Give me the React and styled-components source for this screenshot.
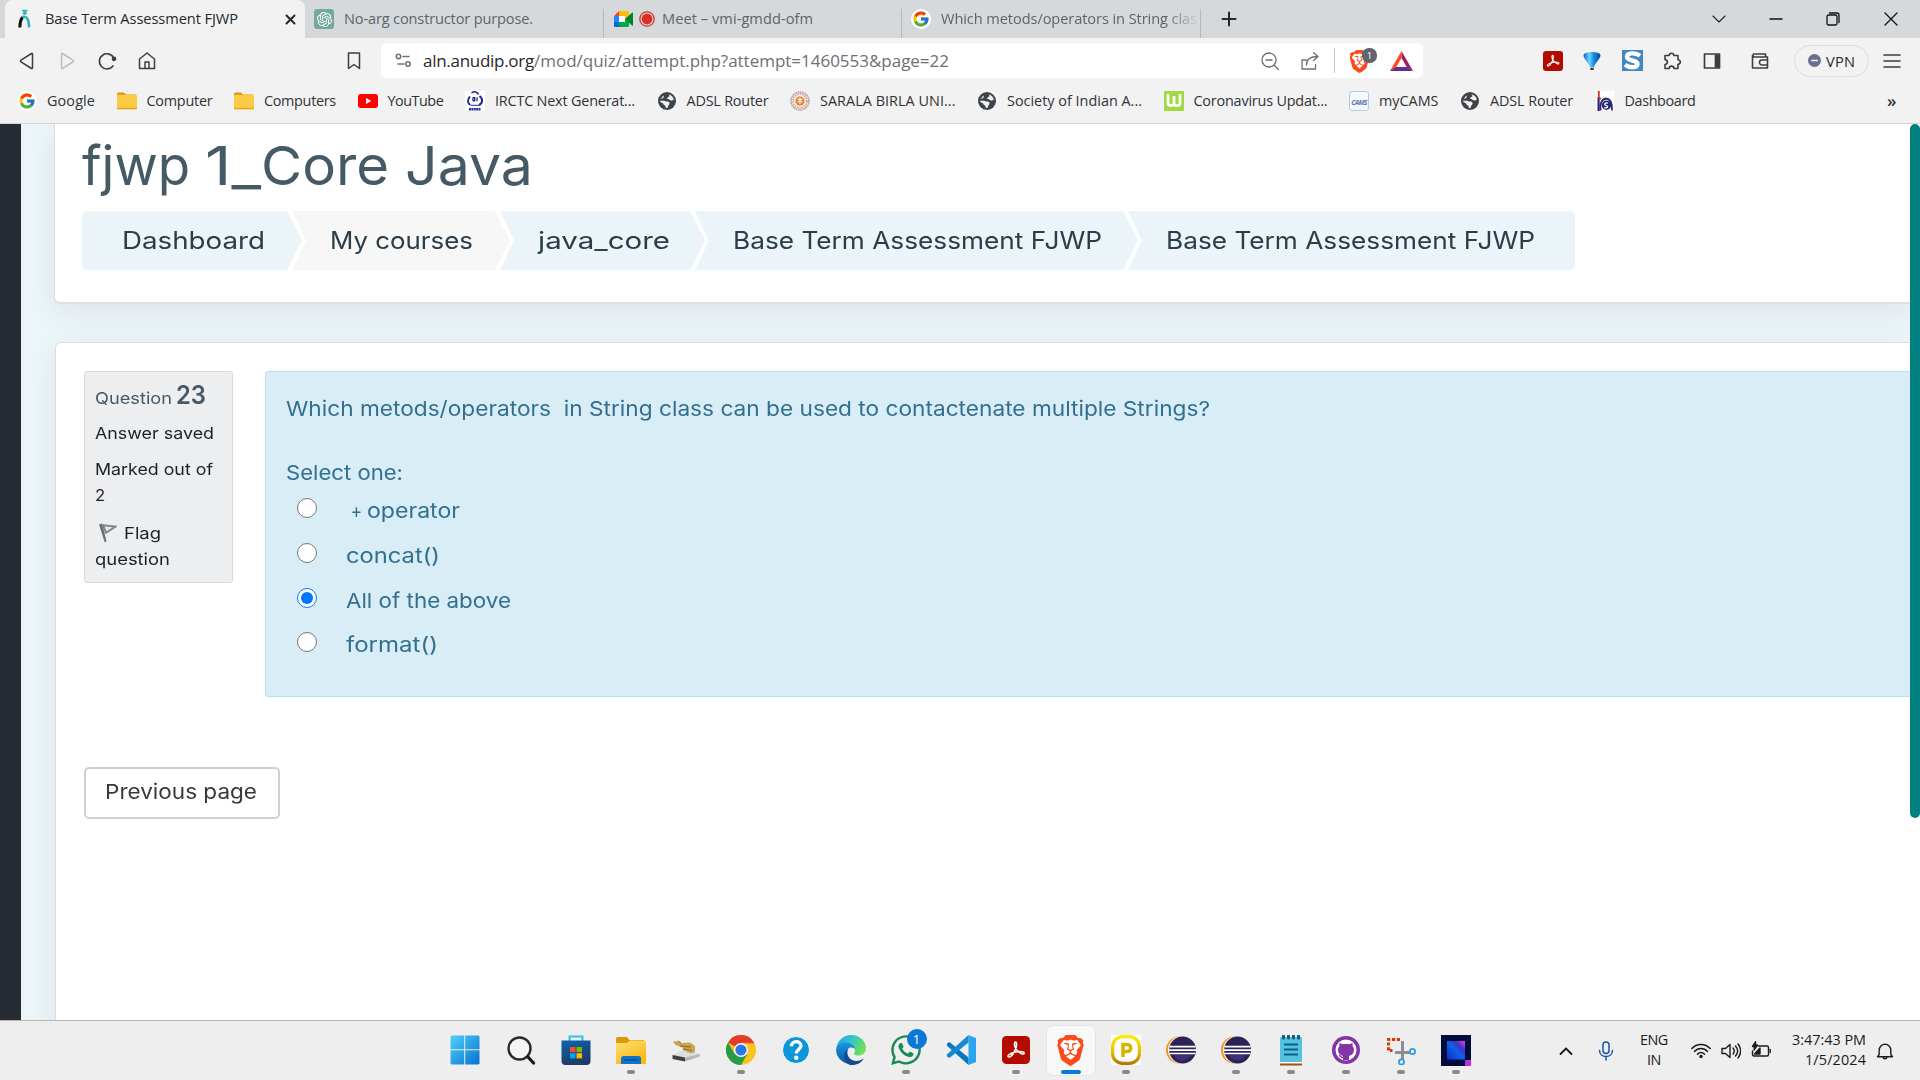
import React, { useLayoutEffect, useRef, useState } from 'react';
import styled, { createGlobalStyle, css } from 'styled-components';
import { FcGoogle } from 'react-icons/fc';
import { FaBrave, FaWhatsapp } from 'react-icons/fa6';
import { SiOpenai } from 'react-icons/si';

const ui = '"Open Sans", "Noto Sans", sans-serif';
const web = 'Inter, "Open Sans", sans-serif';

const Global = createGlobalStyle`
  * { box-sizing: border-box; }
  body { margin: 0; background: #fff; overflow: hidden; font-family: ${ui}; }
  svg { display: block; flex: none; }
`;

/* ---------- text with a set width ---------- */
const Tracked = styled.span`
  display: inline-block;
  flex: none;
  white-space: pre;
  width: ${(p) => p.$w}px;
`;
const Stretched = styled.span`
  display: inline-block;
  transform-origin: 0 50%;
`;

/* chrome labels: width reached by letter spacing */
function Text({ w, children }) {
  const ref = useRef(null);
  const [spacing, setSpacing] = useState(0);
  useLayoutEffect(() => {
    const range = document.createRange();
    range.selectNodeContents(ref.current);
    const natural = range.getBoundingClientRect().width;
    setSpacing((w - natural) / (children.length - 0.5));
  }, [w, children]);
  return (
    <Tracked ref={ref} $w={w} style={{ letterSpacing: spacing }}>
      {children}
    </Tracked>
  );
}

function Wide({ w, children }) {
  const ref = useRef(null);
  const [scale, setScale] = useState(1);
  useLayoutEffect(() => {
    const el = ref.current;
    el.style.transform = 'none';
    const next = w / el.getBoundingClientRect().width;
    el.style.transform = `scaleX(${next})`;
    setScale(next);
  }, [w, children]);
  return (
    <Tracked $w={w}>
      <Stretched ref={ref} style={{ transform: `scaleX(${scale})` }}>{children}</Stretched>
    </Tracked>
  );
}

/* ---------- browser chrome ---------- */
const Screen = styled.div`
  display: flex;
  flex-direction: column;
  width: 1920px;
  height: 1080px;
  overflow: hidden;
`;

const TabStrip = styled.div`
  display: flex;
  height: 38px;
  padding-left: 5px;
  background: #d5d9dc;
  color: #5f6468;
  font-size: 14.6px;
  line-height: 36px;
`;

const Tab = styled.div`
  display: flex;
  align-items: center;
  width: ${(p) => p.$w}px;
  padding-left: ${(p) => p.$pl}px;
  overflow: hidden;
  ${(p) =>
    p.$active &&
    css`
      background: #f2f2f2;
      color: #26292c;
      border-radius: 8px 8px 0 0;
    `}
`;

const TabDivider = styled.div`
  width: 1px;
  height: 29px;
  margin-top: 9px;
  background: #b6babd;
`;

const TabTitle = styled.div`
  display: flex;
  height: 38px;
  margin-left: ${(p) => p.$ml}px;
  overflow: hidden;
  ${(p) =>
    p.$fade &&
    css`
      mask-image: linear-gradient(to right, #000 88%, transparent 101%);
    `}
`;

const Slot = styled.div`
  display: flex;
  flex: none;
  align-items: center;
  justify-content: center;
  width: ${(p) => p.$w}px;
  height: ${(p) => p.$h || p.$w}px;
  margin-left: ${(p) => p.$ml || 0}px;
`;

const GptBadge = styled(Slot)`
  background: #75a99c;
  color: #fff;
  border-radius: 3px;
`;

const WhiteDisc = styled(Slot)`
  background: #fff;
  border-radius: 50%;
`;

const Toolbar = styled.div`
  display: flex;
  align-items: center;
  height: 47px;
  padding-bottom: 2px;
  background: #f2f2f2;
  color: #3b3e43;
`;

const AddressBar = styled.div`
  display: flex;
  align-items: center;
  width: 1042px;
  height: 35px;
  margin-left: 17px;
  background: #fff;
  border-radius: 5px;
  font-size: 17px;
  line-height: 35px;
  color: #6d7074;
`;

const UrlText = styled.div`
  display: flex;
  width: 524px;
  margin-left: 11px;
`;
const Host = styled.span`
  color: #26292c;
`;

const Rule = styled.div`
  width: 1px;
  height: 25px;
  margin-left: 14px;
  background: #c3c5c8;
`;

const ShieldBox = styled.div`
  position: relative;
  width: 28px;
  height: 28px;
  margin-left: 14px;
`;
const CountBadge = styled.div`
  position: absolute;
  left: 13px;
  top: 1px;
  width: 15px;
  height: 15px;
  border-radius: 7px;
  background: #62656f;
  color: #fff;
  font-size: 9.5px;
  line-height: 15px;
  text-align: center;
`;

const VpnPill = styled.div`
  display: flex;
  align-items: center;
  gap: 5px;
  width: 75px;
  height: 32px;
  margin-left: 25px;
  padding-left: 13px;
  border: 1px solid #dddddf;
  border-radius: 16px;
  color: #26292c;
  font-size: 14.6px;
  line-height: 30px;
`;

const Bookmarks = styled.div`
  display: flex;
  align-items: center;
  height: 39px;
  padding: 0 0 7px 17px;
  gap: 21.5px;
  background: #f2f2f2;
  border-bottom: 1px solid #d2d3d4;
  color: #303337;
  font-size: 14.4px;
  line-height: 24px;
`;
const Bookmark = styled.div`
  display: flex;
  align-items: center;
  gap: 10px;
`;
const More = styled.div`
  margin-left: 170px;
  font-size: 17px;
  font-weight: 600;
`;

/* ---------- page ---------- */
const Page = styled.div`
  display: flex;
  height: 896px;
  overflow: hidden;
  font-family: ${web};
`;
const SideRail = styled.div`
  flex: none;
  width: 21px;
  background: #272b33;
`;
const Main = styled.div`
  display: flex;
  flex-direction: column;
  width: 1889px;
  padding-left: 33px;
  background: #ecf5f8;
  overflow: hidden;
`;
const ScrollTrack = styled.div`
  flex: none;
  width: 10px;
  background: #fff;
`;
const ScrollThumb = styled.div`
  height: 694px;
  background: #008080;
  border-radius: 5px;
`;

const card = css`
  background: #fff;
  border: 1px solid #d9dfe2;
  border-right: 0;
  box-shadow: 0 8px 32px rgba(40, 30, 30, 0.075);
`;
const HeaderCard = styled.header`
  ${card}
  flex: none;
  height: 180px;
  padding: 10px 0 0 27px;
  border-top: 0;
  border-bottom-width: 2px;
  border-radius: 0 0 0 6px;
`;
const QuizCard = styled.section`
  ${card}
  flex: none;
  height: 720px;
  margin: 38px 0 0 1px;
  padding: 28px 0 0 28px;
  border-radius: 6px 0 0 0;
`;

const Title = styled.h1`
  margin: 0;
  height: 77px;
  color: #465a65;
  font-size: 54px;
  font-weight: 400;
  line-height: 64px;
`;

const Crumbs = styled.nav`
  display: flex;
  height: 59px;
  color: #2b3e47;
  font-size: 24px;
  font-weight: 370;
  line-height: 60px;
`;
const Crumb = styled.div`
  width: ${(p) => p.$w}px;
  padding-left: 38px;
  margin-left: -10px;
  background: ${(p) => (p.$muted ? '#f7f7f7' : '#ebf4f8')};
  clip-path: polygon(0 0, calc(100% - 15px) 0, 100% 50%, calc(100% - 15px) 100%, 0 100%, 14px 50%);
  &:first-child {
    margin-left: 0;
    padding-left: 40px;
    border-radius: 5px 0 0 5px;
    clip-path: polygon(0 0, calc(100% - 15px) 0, 100% 50%, calc(100% - 15px) 100%, 0 100%);
  }
  &:last-child {
    border-radius: 0 5px 5px 0;
    clip-path: polygon(0 0, 100% 0, 100% 100%, 0 100%, 14px 50%);
  }
`;

const QuestionRow = styled.div`
  display: flex;
  align-items: flex-start;
  gap: 32px;
`;
const InfoBox = styled.aside`
  flex: none;
  width: 149px;
  height: 212px;
  padding: 8px 0 0 10px;
  background: #edeef0;
  border: 1px solid #d6dadd;
  border-radius: 3px;
  color: #1d2125;
  font-size: 16.5px;
  font-weight: 370;
  line-height: 26px;
`;
const QuestionNo = styled.div`
  display: flex;
  align-items: baseline;
  gap: 4px;
  height: 40px;
  color: #465a65;
  line-height: 30px;
`;
const Big = styled.b`
  font-size: 25.5px;
  font-weight: 600;
`;
const InfoLine = styled.div`
  display: flex;
  align-items: center;
  height: 26px;
  margin-bottom: ${(p) => p.$mb || 0}px;
`;

const Formulation = styled.div`
  flex: 1;
  height: 326px;
  padding: 23px 0 0 20px;
  background: #d9edf6;
  border: 1px solid #b9dff0;
  border-right: 0;
  border-radius: 4px 0 0 4px;
  color: #33708f;
  font-size: 20.6px;
  font-weight: 370;
`;
const Prompt = styled.div`
  height: 64px;
  line-height: 27px;
`;
const SelectOne = styled.div`
  height: 31px;
  line-height: 27px;
`;
const Option = styled.label`
  display: flex;
  align-items: flex-start;
  height: ${(p) => p.$h}px;
  padding-left: 11px;
  line-height: 41px;
`;
const Radio = styled.input`
  flex: none;
  width: 20px;
  height: 20px;
  margin: 8px 29px 0 0;
`;
const PrevButton = styled.button`
  display: block;
  width: 196px;
  height: 52px;
  margin-top: 70px;
  padding: 0 0 4px 19px;
  background: #fff;
  border: 2px solid #d0d0d0;
  border-radius: 5px;
  color: #373a3c;
  font: 370 20.6px ${web};
  text-align: left;
`;

/* ---------- taskbar ---------- */
const Taskbar = styled.footer`
  display: flex;
  height: 60px;
  padding-left: 438px;
  background: #eeeeee;
  border-top: 1px solid #b4b4b4;
  color: #1c1c1c;
`;
const TaskCell = styled.div`
  position: relative;
  display: flex;
  flex: none;
  flex-direction: column;
  align-items: center;
  width: 48px;
  height: 49px;
  margin: 5px 3.5px;
  padding-top: 9px;
  border-radius: 6px;
  background: ${(p) => (p.$active ? '#f8f8f8' : 'transparent')};
  box-shadow: ${(p) => (p.$active ? '0 0 0 1px #e6e6e6' : 'none')};
`;
const RunMark = styled.div`
  width: ${(p) => (p.$active ? 20 : 8)}px;
  height: 4px;
  margin-top: 5px;
  border-radius: 2px;
  background: ${(p) => (p.$active ? '#0a78d4' : '#8a8a8a')};
`;
const Unread = styled.div`
  position: absolute;
  left: 25px;
  top: 3px;
  width: 20px;
  height: 20px;
  border-radius: 50%;
  background: #0a78d4;
  color: #fff;
  font-size: 13px;
  line-height: 20px;
  text-align: center;
`;
const Tray = styled.div`
  display: flex;
  align-items: center;
  height: 59px;
  margin-left: 74px;
  font-size: 14.4px;
`;
const Stack = styled.div`
  display: flex;
  flex-direction: column;
  align-items: ${(p) => p.$align};
  width: ${(p) => p.$w}px;
  margin-left: ${(p) => p.$ml}px;
  padding-bottom: 1px;
  line-height: 20px;
`;

/* ---------- icons ---------- */
const Line = ({ w = 20, h, vb = '0 0 20 20', sw = 1.5, color = 'currentColor', children }) => (
  <svg width={w} height={h || w} viewBox={vb} fill="none" stroke={color} strokeWidth={sw} strokeLinecap="round" strokeLinejoin="round">
    {children}
  </svg>
);

const AnudipIcon = () => (
  <svg width="14" height="20" viewBox="0 0 14 20" fill="none">
    <path d="M1.800 18.500C1.800 14 2.800 10.500 4.500 8" stroke="#111" strokeWidth="3" />
    <path d="M4.500 8C9 6.500 11 11 11 18.500" stroke="#27b5b8" strokeWidth="2.600" />
    <circle cx="6.800" cy="4" r="2" fill="#27b5b8" />
    <path d="M4 1.500h5.500" stroke="#27b5b8" strokeWidth="1.600" />
  </svg>
);
const MeetIcon = () => (
  <svg width="19" height="16" viewBox="0 0 19 16">
    <path d="M0 5l5-5v5z" fill="#ea4335" />
    <path d="M5 0h8.500a1.500 1.500 0 0 1 1.500 1.500V6l-4 3V5H5z" fill="#fbbc04" />
    <path d="M0 5h5v6H0z" fill="#2684fc" />
    <path d="M0 11h5v5H1.500A1.500 1.500 0 0 1 0 14.500z" fill="#0066da" />
    <path d="M5 11h6V8l4 3v3.500a1.500 1.500 0 0 1-1.500 1.500H5z" fill="#00ac47" />
    <path d="M11 8l7-6.300c.6-.5 1-.2 1 .4v12c0 .6-.5.9-1 .4z" fill="#00832d" />
    <path d="M5 5h6v6H5z" fill="#fff" />
  </svg>
);
const RecordIcon = () => (
  <svg width="16" height="16" viewBox="0 0 16 16">
    <circle cx="8" cy="8" r="7.200" fill="none" stroke="#d93025" strokeWidth="1.300" />
    <circle cx="8" cy="8" r="5.400" fill="#d93025" />
  </svg>
);
const FolderIcon = () => (
  <svg width="20" height="18" viewBox="0 0 20 18">
    <path d="M0 2a1.500 1.500 0 0 1 1.500-1.500H7l2 2h9.500V8H0z" fill="#d9980b" />
    <rect y="2.800" width="20" height="14.700" rx="1.200" fill="#fbcb46" />
    <path d="M0 16.500h20" stroke="#e0a526" strokeWidth="1.200" />
  </svg>
);
const YoutubeIcon = () => (
  <svg width="20" height="14" viewBox="0 0 20 14">
    <rect width="20" height="14" rx="3" fill="#f00" />
    <path d="M8 4l5.200 3L8 10z" fill="#fff" />
  </svg>
);
const IrctcIcon = () => (
  <svg width="20" height="20" viewBox="0 0 20 20">
    <rect width="20" height="20" fill="#fff" />
    <g fill="none" stroke="#23288c">
      <path d="M5 5.500C2 8.500 2.500 12.500 5.500 14" strokeWidth="1.900" />
      <path d="M6.500 2C9-.2 12.500.8 13.500 3.500" strokeWidth="1.600" />
      <path d="M14.500 5C18.500 8 17.500 12.500 14 14" strokeWidth="2" />
      <path d="M6 14.300h8" strokeWidth="1" />
      <path d="M8 6.200v4M8 6.600h1.700v3.200H8M12 6.200v4" strokeWidth="1.300" />
      <path d="M4 18.300h12" strokeWidth="2.400" strokeDasharray="1.900 .5" />
    </g>
  </svg>
);
const GlobeIcon = () => (
  <svg width="18" height="18" viewBox="0 0 18 18">
    <circle cx="9" cy="9" r="9" fill="#3f4347" />
    <path d="M10.500 2.200c2.800.5 5 2.800 5.300 5.500-1.200 0-1.700 1-3 .8-1.600-.2-1.200-1.400-2.500-1.400-1 0-1.500-.8-.8-1.600.9-.9 2-.4 2-1.500 0-.8-.7-1-1-1.800z" fill="#f2f2f2" />
    <path d="M1.800 8.800h4.500c1 0 1.700.8 2.700.8 1.600 0 2.600.6 2.600 2s-1.400 1.600-1.600 2.800c-.1 1-.6 1.500-1.500 1.600-1.200-.2-.7-1.600-1.300-2.300-.7-.8-2-.7-2-1.900 0-1-2.600-.8-3.400-3z" fill="#f2f2f2" />
    <path d="M5.500 3.600c.8 1 .2 2-.7 2.600l-1.700.8c.5-1.500 1.300-2.600 2.400-3.400z" fill="#f2f2f2" />
  </svg>
);
const SaralaIcon = () => (
  <svg width="20" height="20" viewBox="0 0 20 20">
    <circle cx="10" cy="10" r="9" fill="#f6e8dc" stroke="#98a5b8" strokeWidth="1.500" strokeDasharray="1.400 .5" />
    <circle cx="10" cy="10" r="7" fill="none" stroke="#dda37c" strokeWidth="1.600" strokeDasharray="1.600 .9" />
    <circle cx="10" cy="10" r="4.600" fill="#e7863a" />
    <path d="M7.500 8.300h5M10 6.800v6.200M7.800 11l2.200-1.500 2.200 1.500" stroke="#fff" strokeWidth="1" fill="none" />
  </svg>
);
const WorldometerIcon = () => (
  <svg width="20" height="20" viewBox="0 0 20 20">
    <rect width="20" height="20" rx="1" fill="#a0d943" />
    <path d="M4 3v9c0 3.500 6 3.500 6 0V5v7c0 3.500 6 3.500 6 0V3" fill="none" stroke="#fff" strokeWidth="2.700" />
  </svg>
);
const CamsText = styled.div`
  width: 20px;
  height: 20px;
  border: 1px solid #b7c8e6;
  border-radius: 3px;
  background: #f4f8ff;
  color: #6079b4;
  font: italic 700 7px/21px ${ui};
  letter-spacing: -0.7px;
  text-align: center;
`;
const DashIcon = () => (
  <svg width="18" height="20" viewBox="0 0 18 20">
    <rect width="18" height="20" fill="#fff" />
    <path d="M1.500 6V20h2.200V6z" fill="#27256f" />
    <path d="M1.500.5h1.400v6L5 8" fill="none" stroke="#d8322f" strokeWidth="1.700" />
    <path d="M4.700 19.500c-1.500-6 1-11.500 5.300-12 4 .3 6.300 4 6 12" fill="none" stroke="#27256f" strokeWidth="1.800" />
    <circle cx="10.400" cy="14.200" r="4.700" fill="#27256f" />
    <path d="M12 12.300c-1.500-.8-3.500-.2-3.300 1.100.2 1.300 3 .9 3 2.300 0 1.300-2.200 1.600-3.500.8" fill="none" stroke="#fff" strokeWidth="1.200" />
  </svg>
);
const Adobe = ({ size }) => (
  <svg width={size} height={size} viewBox="0 0 28 28">
    <rect width="28" height="28" rx="4.500" fill="#b30b00" />
    <path d="M6 20.500c-.8-2 5.500-4.500 9.500-4.800 4-.4 7 .2 6.700 1.600-.4 1.700-4 .2-6.500-2.300-2.500-2.400-4-6.500-2.800-8.500.9-1.300 2.100.3 1.500 3.500-.8 4.500-5.700 13.300-8.400 10.500z" fill="none" stroke="#fff" strokeWidth="1.600" />
  </svg>
);
const BatIcon = () => (
  <svg width="23" height="20" viewBox="0 0 23 20">
    <path d="M11.500 0L0 20l6-3.500L11.500 7z" fill="#ff4724" />
    <path d="M11.500 0L23 20l-6-3.500L11.500 7z" fill="#9e1f63" />
    <path d="M0 20h23l-6-4H6z" fill="#662d91" />
  </svg>
);
const BalloonIcon = () => (
  <svg width="18" height="20" viewBox="0 0 18 20">
    <defs>
      <linearGradient id="bl" x1="0" y1="0" x2="1" y2="0">
        <stop offset="0" stopColor="#0b63b5" />
        <stop offset=".35" stopColor="#6fd0ff" />
        <stop offset=".6" stopColor="#168de6" />
        <stop offset="1" stopColor="#07448f" />
      </linearGradient>
    </defs>
    <path d="M.5 4.500C.8 1.800 5 1 9 1s8.200.8 8.500 3.500C17.500 7 12.500 12 10.800 16H7.200C5.500 12 .5 7 .5 4.500z" fill="url(#bl)" />
    <path d="M7.300 16.700h3.400V19H7.300z" fill="#3d3d3d" />
  </svg>
);
const SIcon = () => (
  <svg width="21" height="21" viewBox="0 0 21 21">
    <rect width="21" height="21" fill="#4089c4" />
    <path d="M18 5.800C14 2.500 5 2.200 5 6.800c0 4.700 10.500 2.700 10.500 7.200 0 4.300-8.500 4-12.500.8" fill="none" stroke="#fff" strokeWidth="4.400" />
    <rect x=".5" y=".5" width="20" height="20" fill="none" stroke="#3e86c2" />
  </svg>
);
const FlagIcon = () => (
  <svg width="19" height="20" viewBox="0 0 19 20">
    <path d="M1 1.500l3.200-1 4.300 18-1.800.8z" fill="#6d6f70" />
    <path d="M5 2.200l12.500 1.300-9.500 6.300z" fill="#e6e7e8" stroke="#838586" strokeWidth="2" />
  </svg>
);

const StartIcon = () => (
  <svg width="32" height="30" viewBox="0 0 32 30">
    <defs>
      <linearGradient id="st" x1="0" y1="0" x2="1" y2="1">
        <stop offset="0" stopColor="#4fd0fb" />
        <stop offset="1" stopColor="#0872d0" />
      </linearGradient>
    </defs>
    <path d="M1.500.5h12.700v13.700H.5V1.500zM15.200.5h13.300l1 1v12.700H15.200zM.5 15.200h13.700v14.300H1.500l-1-1zM15.200 15.200h14.300v13.300l-1 1H15.200z" fill="url(#st)" />
  </svg>
);
const SearchIcon = () => (
  <svg width="30" height="30" viewBox="0 0 30 30" fill="none">
    <circle cx="13.500" cy="13.500" r="11" fill="#f4f4f4" stroke="#2b2b2b" strokeWidth="2.400" />
    <path d="M22 22l5.500 6" stroke="#1c1c1c" strokeWidth="3.200" strokeLinecap="round" />
  </svg>
);
const StoreIcon = () => (
  <svg width="30" height="30" viewBox="0 0 30 30">
    <defs>
      <linearGradient id="so" x1="0" y1="0" x2=".3" y2="1">
        <stop offset="0" stopColor="#0d63b0" />
        <stop offset="1" stopColor="#203a68" />
      </linearGradient>
    </defs>
    <path d="M8.500 6V1.500h13V6" fill="none" stroke="#2bc3f3" strokeWidth="2" />
    <path d="M.5 5.500h29V26a4 4 0 0 1-4 4h-21a4 4 0 0 1-4-4z" fill="url(#so)" />
    <path d="M9 12h5.500v5.200H9z" fill="#f25022" />
    <path d="M15.500 12H21v5.200h-5.500z" fill="#7fba00" />
    <path d="M9 18.200h5.500v5.200H9z" fill="#00a4ef" />
    <path d="M15.500 18.200H21v5.200h-5.500z" fill="#ffb900" />
  </svg>
);
const ExplorerIcon = () => (
  <svg width="30" height="30" viewBox="0 0 30 30">
    <defs>
      <linearGradient id="ex" x1="0" y1="0" x2=".6" y2="1">
        <stop offset="0" stopColor="#ffe07a" />
        <stop offset="1" stopColor="#fbb80f" />
      </linearGradient>
    </defs>
    <path d="M0 3.500a1.500 1.500 0 0 1 1.500-1.500H11l2.500 3H28v6H0z" fill="#dc9a06" />
    <path d="M0 8h11l3-2.500h14a2 2 0 0 1 2 2V29H0z" fill="url(#ex)" />
    <path d="M5 29v-5.500a2.500 2.500 0 0 1 2.500-2.500h15a2.500 2.500 0 0 1 2.500 2.500V29z" fill="#1173c7" />
    <path d="M8.500 25h13" stroke="#0c4f93" strokeWidth="1.500" />
  </svg>
);
const DriveIcon = () => (
  <svg width="30" height="30" viewBox="0 0 30 30">
    <path d="M1.500 20L14 14l15 5-13 5z" fill="#dedede" />
    <path d="M1.500 20L14 22.500v4L1.500 24z" fill="#3d4340" />
    <path d="M14 22.500l15-3.500v2.500L14 26.500z" fill="#b5b7b8" />
    <path d="M2 6.500l5.500-.5 2.500 2 9-.5 5 3.500v6l-4 1.500-8-3.500-.5-2.500-7-2.500z" fill="#c9a54f" />
    <path d="M9 11l11 1M12 14l9 1.500M7.500 6l2.500 2" stroke="#8e6a22" />
  </svg>
);
const ChromeIcon = () => (
  <svg width="30" height="30" viewBox="0 0 30 30">
    <circle cx="15" cy="15" r="15" fill="#fcc31e" />
    <path d="M15 15L2 7.500A15 15 0 0 1 28 7.500H15z" fill="#e33b2e" />
    <path d="M2 7.500A15 15 0 0 0 15 30l6.500-11.200L15 15 8.500 18.700z" fill="#269b48" />
    <path d="M15 7.800h13" stroke="#e33b2e" />
    <circle cx="15" cy="15" r="7" fill="#fff" />
    <circle cx="15" cy="15" r="5.600" fill="#2d78e8" />
  </svg>
);
const HelpIcon = () => (
  <svg width="30" height="30" viewBox="0 0 30 30">
    <circle cx="15" cy="15" r="13.500" fill="#0c96d7" stroke="#f8f8f8" strokeWidth="1" />
    <path d="M10.500 11.200c0-6 9.500-5.800 9.500-.4 0 3.500-4.700 3.700-4.700 7.700" fill="none" stroke="#fff" strokeWidth="3.300" />
    <circle cx="15.300" cy="22.700" r="2.200" fill="#fff" />
  </svg>
);
const EdgeIcon = () => (
  <svg width="30" height="30" viewBox="0 0 30 30">
    <defs>
      <linearGradient id="e1" x1="0" y1="0" x2="1" y2=".4">
        <stop offset="0" stopColor="#1c9fe0" />
        <stop offset=".5" stopColor="#2fc3d3" />
        <stop offset="1" stopColor="#6fe058" />
      </linearGradient>
      <linearGradient id="e2" x1="0" y1="0" x2="0" y2="1">
        <stop offset="0" stopColor="#1b96de" />
        <stop offset="1" stopColor="#0a59a8" />
      </linearGradient>
    </defs>
    <path d="M.4 13A15 15 0 0 1 15 0c9 0 15 6.500 15 13 0 5-3.800 7.500-8 7.500-3.500 0-4.500-1.500-3.500-3 1.500-2.500-.5-6.500-5-6.800C8 10.300 2.500 11 .4 13z" fill="url(#e1)" />
    <path d="M0 15.500C.3 9.500 5 7.200 9.500 7.200c5 0 9 3 9.300 6.500-5-3.500-9 .5-8.500 5.500.5 5 4.500 9 9 9.300A15 15 0 0 1 0 15.500z" fill="url(#e2)" />
    <path d="M12.500 13.500c-3.500 6 1.500 12.500 7.500 12.500 3 0 6-1.200 8-3-2.500 5-8 7.500-13.500 7-5-1-7.500-7-6-11 .7-2.500 2-4.500 4-5.500z" fill="#134a90" />
  </svg>
);
const VsIcon = () => (
  <svg width="30" height="30" viewBox="0 0 30 30">
    <path d="M22.500 0L30 3v24l-7.500 3z" fill="#2aa6f0" />
    <path d="M1 8.500L3.500 7l19 15.500V30L.8 10.500z" fill="#0877bd" />
    <path d="M1 21.500L3.500 23l19-15.500V0L.8 19.500z" fill="#1589d1" />
  </svg>
);
const ShieldLion = ({ size }) => (
  <svg width={size} height={size} viewBox="0 0 30 30" overflow="visible">
    <path d="M8 4h14l2 8-3 10-6 5-6-5L6 12z" fill="#fff" />
    <FaBrave size={30} color="#fb4a1c" />
  </svg>
);
const PIcon = () => (
  <svg width="30" height="30" viewBox="0 0 30 30">
    <defs>
      <linearGradient id="pg" x1="0" y1="0" x2="0" y2="1">
        <stop offset="0" stopColor="#ffea00" />
        <stop offset=".6" stopColor="#e3bd00" />
        <stop offset="1" stopColor="#b27a00" />
      </linearGradient>
    </defs>
    <rect width="30" height="30" fill="#fff" />
    <rect x="1.600" y="1.600" width="26.800" height="26.800" rx="10" fill="#fff" stroke="url(#pg)" strokeWidth="3.200" />
    <path d="M12 22V9.500h4c5 0 5 7 0 7h-4" fill="none" stroke="#d8b400" strokeWidth="3.600" />
  </svg>
);
const EclipseIcon = () => (
  <svg width="30" height="30" viewBox="0 0 30 30">
    <circle cx="13.800" cy="15" r="13.800" fill="#f7941e" />
    <circle cx="16" cy="15" r="14" fill="#eee" />
    <circle cx="16.600" cy="15" r="13.400" fill="#2c2255" />
    <path d="M8 20h17c-2 4-5 5.500-8.500 5.500S10 24 8 20z" fill="#3f3177" />
    <path d="M3.500 11.700h26M3 15.100h27M3.500 18.500h26" stroke="#fff" strokeWidth="1.700" />
  </svg>
);
const NotepadIcon = () => (
  <svg width="30" height="31" viewBox="0 0 30 31">
    <rect x="4" y="2" width="22" height="25" rx="1" fill="#55c2e0" />
    <path d="M4 27h22v1.500H4z" fill="#fff" />
    <path d="M4 28.500h22v2H4z" fill="#a1500e" />
    <path d="M8 9.500h14M8 14.500h14M8 19.500h14" stroke="#0c5f83" strokeWidth="1.800" />
    <path d="M7.500 1v2M12.500 1v2M17.500 1v2M22.500 1v2" stroke="#155c78" strokeWidth="3" strokeLinecap="round" />
  </svg>
);
const GithubIcon = () => (
  <svg width="30" height="30" viewBox="0 0 30 30">
    <circle cx="15" cy="15" r="14" fill="#8334a6" />
    <circle cx="15" cy="15" r="10.500" fill="#fff" />
    <path d="M12 25v-4c-3.500-1-5-3-5-6 0-1.500.5-2.700 1.400-3.700V8l3.300 1.300c2-.5 4.600-.5 6.600 0L21.600 8v3.300c.9 1 1.400 2.200 1.400 3.700 0 3-1.500 5-5 6v4z" fill="#8334a6" />
    <path d="M8 20.500c2 0 1.700 2.500 4.500 2.200" fill="none" stroke="#8334a6" strokeWidth="1.300" />
  </svg>
);
const SnipIcon = () => (
  <svg width="30" height="30" viewBox="0 0 30 30" fill="none">
    <path d="M14 4.500H2.500V15.500h4" stroke="#d83b01" strokeWidth="3" strokeDasharray="3.200 1.600" />
    <path d="M16.500 6v18M9 17.500h15" stroke="#8b8f93" strokeWidth="3" />
    <circle cx="26.500" cy="16.500" r="2.600" stroke="#2b9fe3" strokeWidth="1.800" />
    <circle cx="15.500" cy="27" r="2.600" stroke="#2b9fe3" strokeWidth="1.800" />
  </svg>
);
const PurpleIcon = () => (
  <svg width="30" height="31" viewBox="0 0 30 31">
    <defs>
      <linearGradient id="pp" x1="0" y1="1" x2="1" y2="0">
        <stop offset="0" stopColor="#1727c4" />
        <stop offset=".5" stopColor="#0b62ec" />
        <stop offset=".7" stopColor="#3b33c8" />
        <stop offset="1" stopColor="#e93ce8" />
      </linearGradient>
    </defs>
    <rect width="30" height="31" fill="#020c3a" />
    <rect x="6" y="6" width="18" height="18.500" fill="url(#pp)" />
    <rect x="24" y="25" width="6" height="6" fill="#c42be0" />
  </svg>
);

const tasks = [
  { id: 'start', icon: <StartIcon /> },
  { id: 'search', icon: <SearchIcon /> },
  { id: 'store', icon: <StoreIcon /> },
  { id: 'explorer', icon: <ExplorerIcon />, run: true },
  { id: 'drive', icon: <DriveIcon /> },
  { id: 'chrome', icon: <ChromeIcon />, run: true },
  { id: 'help', icon: <HelpIcon /> },
  { id: 'edge', icon: <EdgeIcon /> },
  { id: 'whatsapp', icon: <FaWhatsapp size={34} color="#198a54" />, run: true, unread: '1' },
  { id: 'code', icon: <VsIcon /> },
  { id: 'acrobat', icon: <Adobe size={28} />, run: true },
  { id: 'brave', icon: <ShieldLion size={31} />, run: true, active: true },
  { id: 'p', icon: <PIcon />, run: true },
  { id: 'eclipse', icon: <EclipseIcon /> },
  { id: 'eclipse2', icon: <EclipseIcon />, run: true },
  { id: 'notepad', icon: <NotepadIcon />, run: true },
  { id: 'github', icon: <GithubIcon />, run: true },
  { id: 'snip', icon: <SnipIcon />, run: true },
  { id: 'purple', icon: <PurpleIcon />, run: true },
];

const bookmarks = [
  { t: 'Google', w: 48, icon: <WhiteDisc $w={20}><FcGoogle size={18} /></WhiteDisc> },
  { t: 'Computer', w: 66, icon: <FolderIcon /> },
  { t: 'Computers', w: 72, icon: <FolderIcon /> },
  { t: 'YouTube', w: 56, icon: <YoutubeIcon /> },
  { t: 'IRCTC Next Generat...', w: 140, icon: <IrctcIcon /> },
  { t: 'ADSL Router', w: 82, icon: <GlobeIcon /> },
  { t: 'SARALA BIRLA UNI...', w: 135.5, icon: <SaralaIcon /> },
  { t: 'Society of Indian A...', w: 135, icon: <GlobeIcon /> },
  { t: 'Coronavirus Updat...', w: 134, icon: <WorldometerIcon /> },
  { t: 'myCAMS', w: 59.5, icon: <CamsText>CAMS</CamsText> },
  { t: 'ADSL Router', w: 83, icon: <GlobeIcon /> },
  { t: 'Dashboard', w: 71, icon: <DashIcon /> },
];

const options = [
  { parts: [[' + ', 21], ['operator', 93]], h: 45 },
  { parts: [['concat()', 94]], h: 45 },
  { parts: [['All of the above', 165]], h: 44 },
  { parts: [['format()', 92]], h: 44 },
];

export default function App() {
  const [choice, setChoice] = useState(2);
  return (
    <Screen>
      <Global />
      <TabStrip>
        <Tab $active $w={300} $pl={13}>
          <AnudipIcon />
          <TabTitle $ml={13}><Text w={193}>Base Term Assessment FJWP</Text></TabTitle>
          <Slot $w={12} $ml={46}>
            <Line w={11} vb="0 0 11 11" sw={2}><path d="M1.500 1.500l8 8m0-8l-8 8" /></Line>
          </Slot>
        </Tab>
        <Tab $w={298} $pl={9}>
          <GptBadge $w={20}><SiOpenai size={15} /></GptBadge>
          <TabTitle $ml={10}><Text w={189}>No-arg constructor purpose.</Text></TabTitle>
        </Tab>
        <TabDivider />
        <Tab $w={297} $pl={10}>
          <MeetIcon />
          <Slot $w={16} $ml={6}><RecordIcon /></Slot>
          <TabTitle $ml={7}><Text w={151}>Meet – vmi-gmdd-ofm</Text></TabTitle>
        </Tab>
        <TabDivider />
        <Tab $w={298} $pl={9}>
          <WhiteDisc $w={20}><FcGoogle size={18} /></WhiteDisc>
          <TabTitle $ml={10} $fade><Text w={256}>Which metods/operators in String clas</Text></TabTitle>
        </Tab>
        <TabDivider />
        <Slot $w={16} $h={37} $ml={20}><Line w={16} vb="0 0 16 16" sw={2} color="#26292c"><path d="M8 1.500v13M1.500 8h13" /></Line></Slot>
        <Slot $w={14} $h={37} $ml={475}><Line w={14} vb="0 0 14 14" sw={1.1} color="#222"><path d="M1 4l6 6 6-6" /></Line></Slot>
        <Slot $w={14} $h={37} $ml={43}><Line w={14} vb="0 0 14 14" sw={1.3} color="#111"><path d="M1 7h12" /></Line></Slot>
        <Slot $w={14} $h={37} $ml={43}>
          <Line w={14} vb="0 0 14 14" sw={1.3} color="#111">
            <rect x="1" y="3" width="10" height="10" rx="1.500" />
            <path d="M3.500 1H11a2 2 0 0 1 2 2v7.500" />
          </Line>
        </Slot>
        <Slot $w={14} $h={37} $ml={44}><Line w={14} vb="0 0 14 14" sw={1.3} color="#111"><path d="M1 1l12 12M13 1L1 13" /></Line></Slot>
      </TabStrip>

      <Toolbar>
        <Slot $w={20} $ml={17}><Line><path d="M15.500 3v14c0 .6-.6.800-1 .5L4 10.800c-.7-.5-.7-1.100 0-1.600l10.500-6.700c.4-.3 1-.1 1 .5z" /></Line></Slot>
        <Slot $w={20} $ml={20}><Line color="#bcbdbf"><path d="M4.500 3v14c0 .6.6.800 1 .5L16 10.800c.7-.5.7-1.100 0-1.600L5.500 2.500c-.4-.3-1-.1-1 .5z" /></Line></Slot>
        <Slot $w={20} $ml={20}>
          <Line sw={1.7}><path d="M16 15A7.600 7.600 0 1 1 17 7.500" /><circle cx="17" cy="7.800" r="1.500" fill="currentColor" /></Line>
        </Slot>
        <Slot $w={20} $ml={20}><Line><path d="M2.500 8L10 2l7.500 6v9.500h-15zM8 17.500V11h4v6.500" /></Line></Slot>
        <Slot $w={20} $ml={187}><Line><path d="M4.500 2h11v15.500L10 13.500l-5.500 4z" /></Line></Slot>
        <AddressBar>
          <Slot $w={18} $ml={13}>
            <Line w={17} vb="0 0 17 17" sw={1.5}>
              <circle cx="3.500" cy="4.500" r="2.200" /><path d="M8 4.500h6M3 12h6" /><circle cx="13" cy="12" r="2.200" />
            </Line>
          </Slot>
          <UrlText>
            <Host><Text w={111}>aln.anudip.org</Text></Host>
            <Text w={415}>/mod/quiz/attempt.php?attempt=1460553&amp;page=22</Text>
          </UrlText>
          <Slot $w={20} $ml={313}><Line sw={1.3}><circle cx="9" cy="9" r="7" /><path d="M6 9h6M14.200 14.200L18.500 18.500" /></Line></Slot>
          <Slot $w={20} $ml={20}><Line sw={1.3}><path d="M6.500 9H2v9h13.500v-4.500M6.500 14c0-6 4-8.500 11-8.500M13.500 1.800l4.500 3.700-4.500 4" /></Line></Slot>
          <Rule />
          <ShieldBox>
            <Slot $w={20} $h={30}><ShieldLion size={23} /></Slot>
            <CountBadge>1</CountBadge>
          </ShieldBox>
          <Slot $w={23} $ml={13}><BatIcon /></Slot>
        </AddressBar>
        <Slot $w={21} $ml={119}><Adobe size={20} /></Slot>
        <Slot $w={18} $ml={20}><BalloonIcon /></Slot>
        <Slot $w={21} $ml={21}><SIcon /></Slot>
        <Slot $w={20} $ml={19}>
          <Line sw={1.6}><path d="M3 4.500h4.200a2.300 2.300 0 1 1 4.600 0h4.200v4.200a2.300 2.300 0 1 1 0 4.600v4.200h-4a2.300 2.300 0 0 0-4.800 0H3v-4a2.400 2.400 0 0 0 0-4.800z" /></Line>
        </Slot>
        <Slot $w={18} $ml={21}><Line w={18} vb="0 0 18 18" sw={1.700}><path d="M1.500 2h15v14h-15z" /><path d="M12.500 3h3v12h-3z" fill="currentColor" /></Line></Slot>
        <Slot $w={18} $ml={30}>
          <Line w={18} vb="0 0 18 18" sw={1.600}><path d="M14.500 5V2H3a1.600 1.600 0 0 0 0 3h13.500v11h-15V3.500M16.500 8H11a2.500 2.500 0 0 0 0 5h5.500z" /></Line>
        </Slot>
        <VpnPill>
          <Line w={13} vb="0 0 13 13" sw={1.700} color="#fff"><circle cx="6.500" cy="6.500" r="6.500" fill="#696f8f" stroke="none" /><path d="M4 6.500h5" /></Line>
          <Text w={29}>VPN</Text>
        </VpnPill>
        <Slot $w={18} $ml={14}><Line w={18} vb="0 0 18 18" sw={1.600}><path d="M1 3h16M1 9h16M1 15h16" /></Line></Slot>
      </Toolbar>

      <Bookmarks>
        {bookmarks.map((b, i) => (
          <Bookmark key={i}>
            <Slot $w={20}>{b.icon}</Slot>
            <Text w={b.w}>{b.t}</Text>
          </Bookmark>
        ))}
        <More>»</More>
      </Bookmarks>

      <Page>
        <SideRail />
        <Main>
          <HeaderCard>
            <Title><Wide w={123}>fjwp </Wide><Wide w={56}>1_</Wide><Wide w={144}>Core </Wide><Wide w={128}>Java</Wide></Title>
            <Crumbs>
              <Crumb $w={220}><Wide w={143}>Dashboard</Wide></Crumb>
              <Crumb $w={218} $muted><Wide w={143}>My courses</Wide></Crumb>
              <Crumb $w={205}><Wide w={132}>java_core</Wide></Crumb>
              <Crumb $w={443}><Wide w={369}>Base Term Assessment FJWP</Wide></Crumb>
              <Crumb $w={447}><Wide w={369}>Base Term Assessment FJWP</Wide></Crumb>
            </Crumbs>
          </HeaderCard>
          <QuizCard>
            <QuestionRow>
              <InfoBox>
                <QuestionNo><Wide w={77}>Question</Wide><Big><Wide w={30}>23</Wide></Big></QuestionNo>
                <InfoLine $mb={10}><Wide w={119}>Answer saved</Wide></InfoLine>
                <InfoLine><Wide w={118}>Marked out of</Wide></InfoLine>
                <InfoLine $mb={12}>2</InfoLine>
                <InfoLine><Slot $w={19} $ml={3}><FlagIcon /></Slot><Slot $w={7} /><Wide w={37}>Flag</Wide></InfoLine>
                <InfoLine><Wide w={75}>question</Wide></InfoLine>
              </InfoBox>
              <Formulation>
                <Prompt><Wide w={924}>Which metods/operators  in String class can be used to contactenate multiple Strings?</Wide></Prompt>
                <SelectOne><Wide w={117}>Select one:</Wide></SelectOne>
                {options.map((o, i) => (
                  <Option key={i} $h={o.h}>
                    <Radio type="radio" name="answer" checked={choice === i} onChange={() => setChoice(i)} />
                    {o.parts.map(([t, w]) => <Wide key={t} w={w}>{t}</Wide>)}
                  </Option>
                ))}
              </Formulation>
            </QuestionRow>
            <PrevButton><Wide w={152}>Previous page</Wide></PrevButton>
          </QuizCard>
        </Main>
        <ScrollTrack><ScrollThumb /></ScrollTrack>
      </Page>

      <Taskbar>
        {tasks.map((t) => (
          <TaskCell key={t.id} $active={t.active}>
            <Slot $w={30}>{t.icon}</Slot>
            {t.run && <RunMark $active={t.active} />}
            {t.unread && <Unread>{t.unread}</Unread>}
          </TaskCell>
        ))}
        <Tray>
          <Slot $w={14} $ml={2}><Line w={14} vb="0 0 14 14" sw={1.800}><path d="M1.500 10L7 4.500l5.500 5.500" /></Line></Slot>
          <Slot $w={20} $ml={23}><Line sw={1.500} color="#1656a5"><rect x="7" y="1" width="6" height="11.500" rx="3" /><path d="M3.500 9.500c0 8 13 8 13 0M10 15.500V19" /></Line></Slot>
          <Stack $w={30} $ml={23} $align="center"><Text w={28}>ENG</Text><Text w={14}>IN</Text></Stack>
          <Slot $w={20} $ml={22}>
            <Line sw={1.500}><path d="M.8 7.500c5-5.500 13.400-5.500 18.400 0M3.500 10.500c3.600-4 9.400-4 13 0M6.500 13.200c2-2.300 5-2.300 7 0" /><circle cx="10" cy="15.500" r="1" fill="currentColor" /></Line>
          </Slot>
          <Slot $w={20} $ml={10}>
            <Line sw={1.400}><path d="M1 7.500h3.500L9 3.500v13L4.500 12.500H1zM12 7c1.500 1.800 1.500 4.200 0 6M14.500 5c2.600 3 2.600 7 0 10M17 3c3.500 4.200 3.500 9.800 0 14" /></Line>
          </Slot>
          <Slot $w={20} $ml={10}>
            <Line sw={1.400}>
              <path d="M7.500 5H16a1.500 1.500 0 0 1 1.500 1.500v7A1.500 1.500 0 0 1 16 15H3a1.500 1.500 0 0 1-1.500-1.500V10" />
              <path d="M19.200 8.500v3" />
              <path d="M3.500 13l5.500-6v6zM4.500.800L1.500 5.500h2L3 9l3.500-5h-2z" fill="currentColor" />
            </Line>
          </Slot>
          <Stack $w={74} $ml={21} $align="flex-end"><Text w={74}>3:47:43 PM</Text><Text w={61}>1/5/2024</Text></Stack>
          <Slot $w={20} $ml={9}>
            <Line sw={1.400}><path d="M4.200 13.500V9a5.800 5.800 0 0 1 11.600 0v4.500l1.700 2.200h-15zM8 16c.5 2.500 3.500 2.500 4 0" /></Line>
          </Slot>
        </Tray>
      </Taskbar>
    </Screen>
  );
}
